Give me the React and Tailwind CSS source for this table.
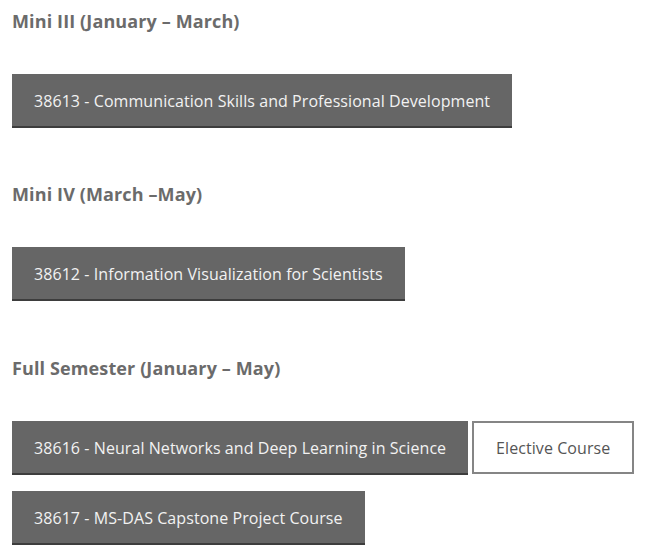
export default function App() {
  const font = { fontFamily: '"Open Sans", "Noto Sans", sans-serif' };
  const Btn = ({ children }) => (
    <div className="inline-block bg-[#666666] border-b-2 border-[#3d3d3d] px-[22px] pt-[15px] pb-[13px] text-[16px] leading-[24px] tracking-[0.07px] text-[#f2f2f2]">
      {children}
    </div>
  );
  const H = ({ children, className = "" }) => (
    <div className={"text-[18px] leading-[24px] font-bold tracking-[0.12px] text-[#6b6b6b] " + className}>{children}</div>
  );
  return (
    <div className="bg-white w-[669px] h-[555px] px-[12px] pt-[9px]" style={font}>
      <H>Mini III (January – March)</H>
      <div className="mt-[41px] flex">
        <Btn>38613 - Communication Skills and Professional Development</Btn>
      </div>
      <H className="mt-[54px]">Mini IV (March –May)</H>
      <div className="mt-[41px] flex">
        <Btn>38612 - Information Visualization for Scientists</Btn>
      </div>
      <H className="mt-[55px]">Full Semester (January – May)</H>
      <div className="mt-[41px] flex gap-[4px]">
        <Btn>38616 - Neural Networks and Deep Learning in Science</Btn>
        <div className="w-[162px] h-[53px] border-2 border-[#858585] bg-white flex items-center justify-center pt-[1px] text-[16px] tracking-[0.07px] text-[#555555]">
          Elective Course
        </div>
      </div>
      <div className="mt-[16px] flex">
        <Btn>38617 - MS-DAS Capstone Project Course</Btn>
      </div>
    </div>
  );
}
